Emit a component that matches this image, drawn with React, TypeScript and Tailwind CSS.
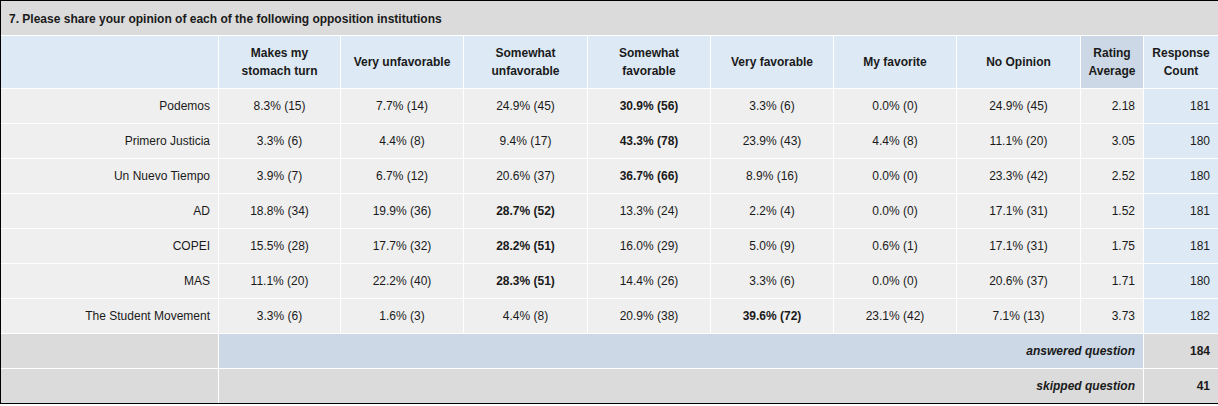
const columns = [
  "Makes my stomach turn",
  "Very unfavorable",
  "Somewhat unfavorable",
  "Somewhat favorable",
  "Very favorable",
  "My favorite",
  "No Opinion",
];

type Row = {
  name: string;
  cells: string[];
  bold: number;
  avg: string;
  count: string;
};

const rows: Row[] = [
  {
    name: "Podemos",
    cells: ["8.3% (15)", "7.7% (14)", "24.9% (45)", "30.9% (56)", "3.3% (6)", "0.0% (0)", "24.9% (45)"],
    bold: 3,
    avg: "2.18",
    count: "181",
  },
  {
    name: "Primero Justicia",
    cells: ["3.3% (6)", "4.4% (8)", "9.4% (17)", "43.3% (78)", "23.9% (43)", "4.4% (8)", "11.1% (20)"],
    bold: 3,
    avg: "3.05",
    count: "180",
  },
  {
    name: "Un Nuevo Tiempo",
    cells: ["3.9% (7)", "6.7% (12)", "20.6% (37)", "36.7% (66)", "8.9% (16)", "0.0% (0)", "23.3% (42)"],
    bold: 3,
    avg: "2.52",
    count: "180",
  },
  {
    name: "AD",
    cells: ["18.8% (34)", "19.9% (36)", "28.7% (52)", "13.3% (24)", "2.2% (4)", "0.0% (0)", "17.1% (31)"],
    bold: 2,
    avg: "1.52",
    count: "181",
  },
  {
    name: "COPEI",
    cells: ["15.5% (28)", "17.7% (32)", "28.2% (51)", "16.0% (29)", "5.0% (9)", "0.6% (1)", "17.1% (31)"],
    bold: 2,
    avg: "1.75",
    count: "181",
  },
  {
    name: "MAS",
    cells: ["11.1% (20)", "22.2% (40)", "28.3% (51)", "14.4% (26)", "3.3% (6)", "0.0% (0)", "20.6% (37)"],
    bold: 2,
    avg: "1.71",
    count: "180",
  },
  {
    name: "The Student Movement",
    cells: ["3.3% (6)", "1.6% (3)", "4.4% (8)", "20.9% (38)", "39.6% (72)", "23.1% (42)", "7.1% (13)"],
    bold: 4,
    avg: "3.73",
    count: "182",
  },
];

export default function App() {
  return (
    <div className="w-[1218px] h-[406px] bg-white font-['Liberation_Sans',Arial,sans-serif] text-[12px] text-[#1a1a1a]">
      <div className="border-l border-t border-b border-black">
        <div className="grid grid-cols-[217px_121px_122px_123px_122px_122px_122px_123px_62px_1fr] gap-px bg-white">
          {/* Title */}
          <div className="col-span-10 h-[34px] bg-[#dbdbdb] flex items-center pl-2 pt-px font-bold">
            7. Please share your opinion of each of the following opposition institutions
          </div>

          {/* Header */}
          <div className="h-[52px] bg-[#dde9f5]" />
          {columns.map((c) => (
            <div
              key={c}
              className="h-[52px] bg-[#dde9f5] flex items-center justify-center text-center font-bold leading-[18px] px-2"
            >
              {c}
            </div>
          ))}
          <div className="h-[52px] bg-[#ccd8e5] flex items-center justify-center text-center font-bold leading-[18px]">
            Rating Average
          </div>
          <div className="h-[52px] bg-[#dde9f5] flex items-center justify-center text-center font-bold leading-[18px]">
            Response Count
          </div>

          {/* Rows */}
          {rows.map((r) => (
            <div key={r.name} className="contents">
              <div className="h-[34px] bg-[#efefef] flex items-center justify-end pr-2">
                {r.name}
              </div>
              {r.cells.map((v, i) => (
                <div
                  key={i}
                  className={
                    "h-[34px] bg-[#efefef] flex items-center justify-center" +
                    (i === r.bold ? " font-bold" : "")
                  }
                >
                  {v}
                </div>
              ))}
              <div className="h-[34px] bg-[#efefef] flex items-center justify-end pr-2">
                {r.avg}
              </div>
              <div className="h-[34px] bg-[#dde9f5] flex items-center justify-end pr-2">
                {r.count}
              </div>
            </div>
          ))}

          {/* Footer */}
          <div className="h-[34px] bg-[#dbdbdb]" />
          <div className="col-span-8 h-[34px] bg-[#ccd8e5] flex items-center justify-end pr-2 font-bold italic">
            answered question
          </div>
          <div className="h-[34px] bg-[#dbdbdb] flex items-center justify-end pr-2 font-bold">
            184
          </div>
          <div className="h-[34px] bg-[#dbdbdb]" />
          <div className="col-span-8 h-[34px] bg-[#dbdbdb] flex items-center justify-end pr-2 font-bold italic">
            skipped question
          </div>
          <div className="h-[34px] bg-[#dbdbdb] flex items-center justify-end pr-2 font-bold">
            41
          </div>
        </div>
      </div>
    </div>
  );
}
